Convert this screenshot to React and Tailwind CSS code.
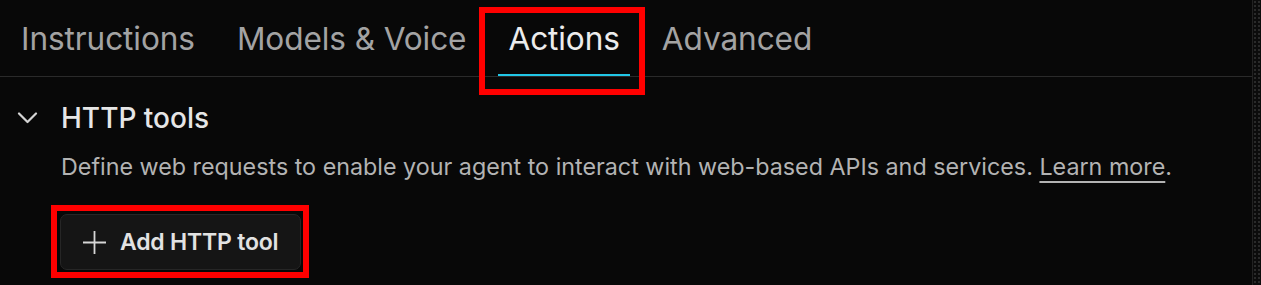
import { useState } from 'react'

const tabs = ['Instructions', 'Models & Voice', 'Actions', 'Advanced']

export default function App() {
  const [active, setActive] = useState('Actions')

  return (
    <div className="flex h-[285px] w-full overflow-hidden bg-[#080808] font-['Inter',sans-serif]">
      <div className="flex-1 min-w-0">
        {/* Tab bar */}
        <div className="flex h-[77px] gap-[22px] border-b border-[#2a2a2a] pl-[11px]">
          {tabs.map(t => (
            <button
              key={t}
              onClick={() => setActive(t)}
              className={`relative flex h-full items-center px-[10px] pt-[2px] text-[31.6px] leading-none tracking-[-0.1px] ${active === t ? 'text-[#ececec]' : 'text-[#a3a3a3]'}`}
            >
              {t}
              {active === t && (
                <>
                  <span className="absolute bottom-0 left-0 right-0 h-[2px] bg-[#22c7e6]" />
                  <span className="pointer-events-none absolute top-[7px] -bottom-[19px] -left-[19px] -right-[15px] border-[6px] border-[#ff0000]" />
                </>
              )}
            </button>
          ))}
        </div>

        {/* HTTP tools section */}
        <div className="pt-[27px]">
          <div className="flex items-center">
            <div className="flex w-[61px] justify-start pl-[17px]">
              <svg width="21" height="12" viewBox="0 0 21 12" fill="none" stroke="#d4d4d4" strokeWidth="2.2" strokeLinecap="round" strokeLinejoin="round">
                <path d="M2 1.5 L10.5 10 L19 1.5" />
              </svg>
            </div>
            <h3 className="text-[28px] font-medium leading-[28px] text-[#e6e6e6]">HTTP tools</h3>
          </div>
          <p className="mt-[22px] pl-[61px] text-[23.3px] leading-[26px] text-[#b3b3b3]">
            Define web requests to enable your agent to interact with web-based APIs and services.{' '}
            <a href="#" className="underline decoration-[2px] underline-offset-[6px]">Learn more</a>.
          </p>
          <div className="mt-[34px] pl-[60px]">
            <button className="relative flex h-[56px] w-[241px] items-center gap-[13px] rounded-[7px] border border-[#262626] bg-[#151515] pl-[21px] text-[23px] font-semibold tracking-[-0.2px] text-[#e2e2e2]">
              <svg width="25" height="25" viewBox="0 0 25 25" fill="none" stroke="#d6d6d6" strokeWidth="1.8">
                <path d="M12.5 1 V24 M1 12.5 H24" />
              </svg>
              Add HTTP tool
              <span className="pointer-events-none absolute -top-[10px] -bottom-[9px] -left-[10px] -right-[9px] border-[6px] border-[#ff0000]" />
            </button>
          </div>
        </div>
      </div>

      {/* Scrollbar gutter */}
      <div className="flex w-[9px] shrink-0">
        <div className="w-[1px] bg-[#222]" />
        <div className="flex-1 bg-[#0c0c0c] bg-[radial-gradient(#2a2a2a_1px,transparent_1.2px)] bg-[length:4px_4px]" />
      </div>
    </div>
  )
}
